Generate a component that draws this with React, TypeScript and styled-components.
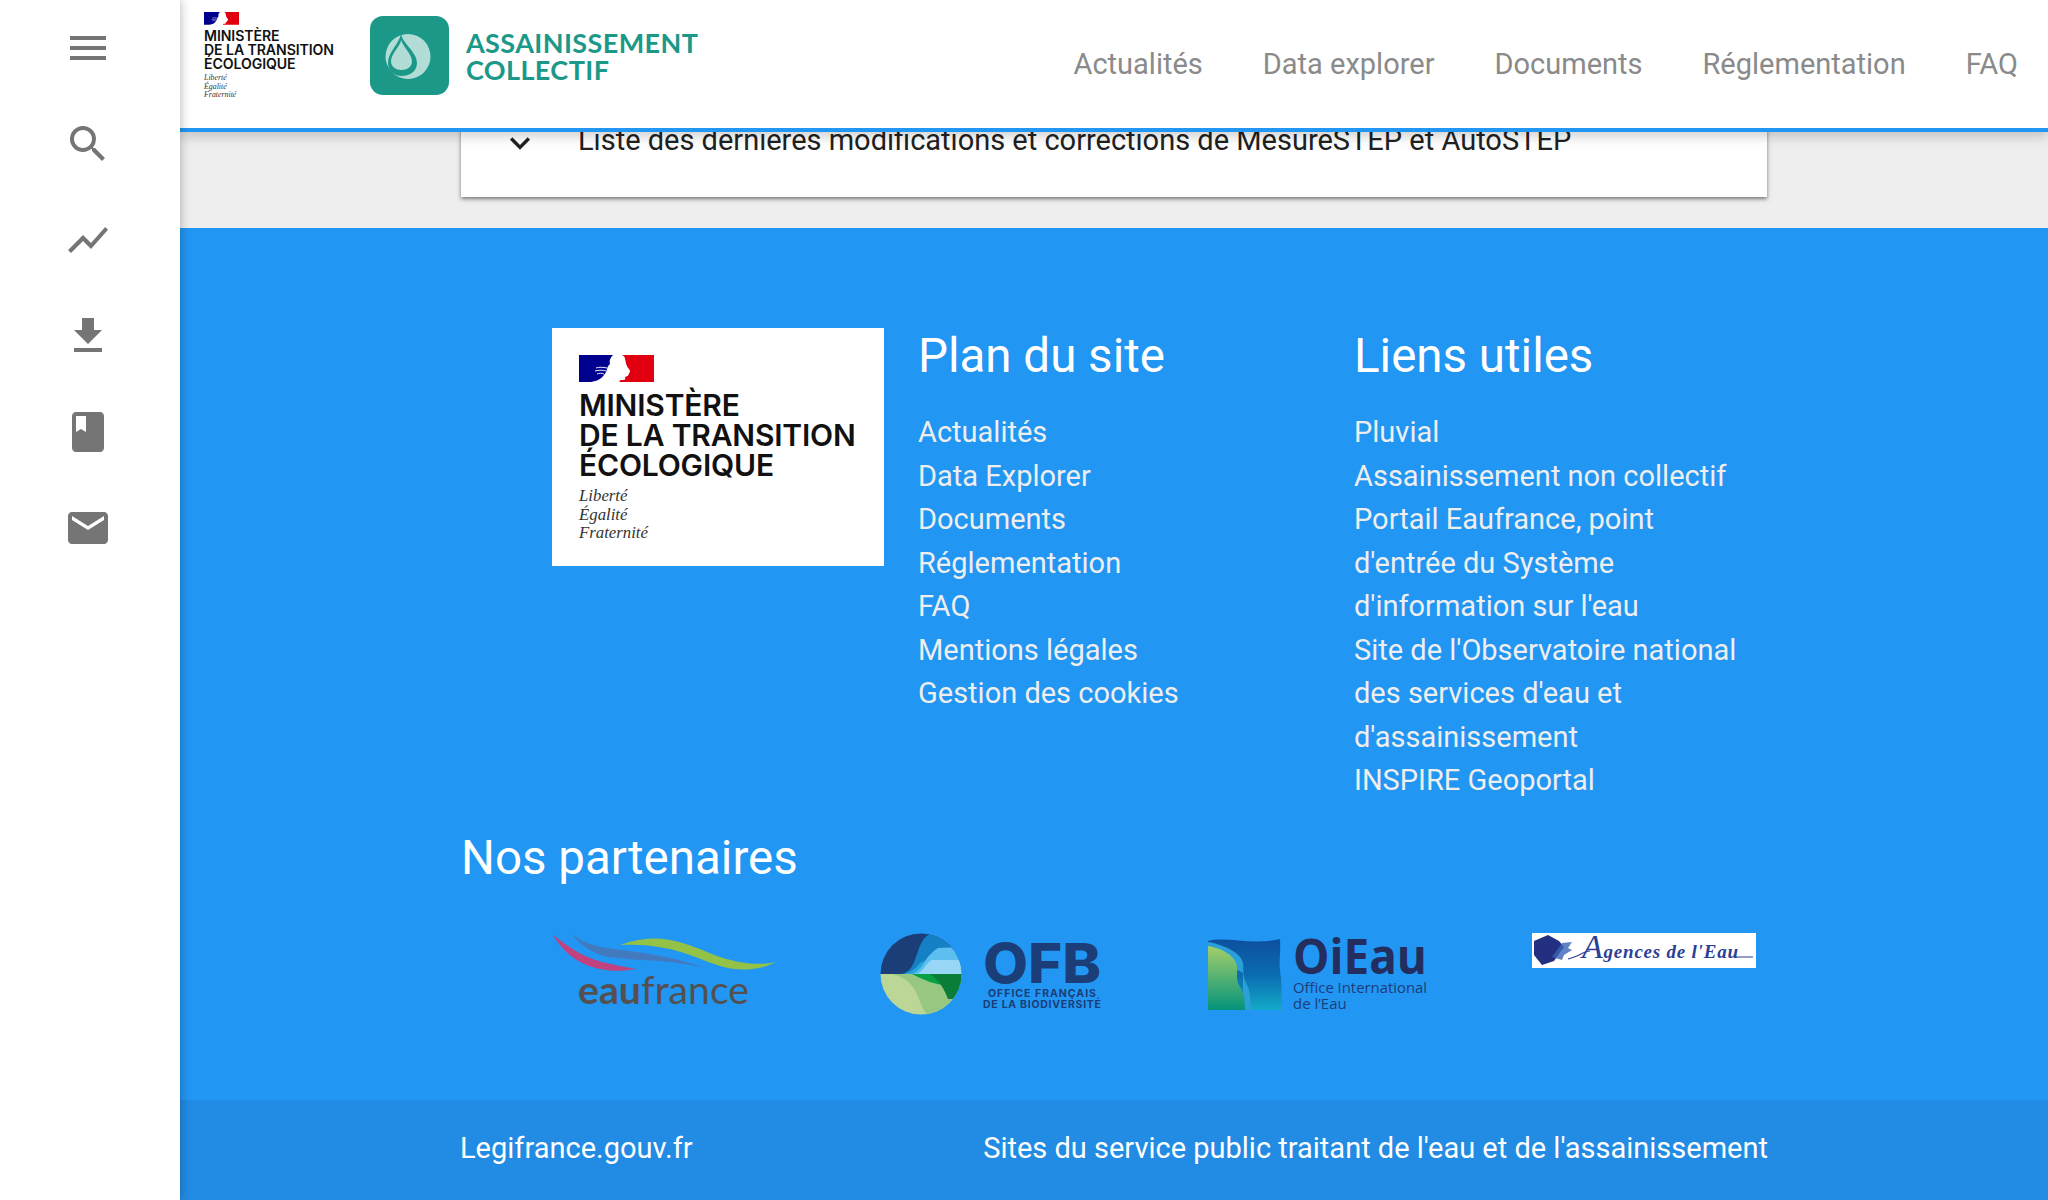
import React from "react";
import styled, { createGlobalStyle } from "styled-components";
import { MdMenu, MdSearch, MdShowChart, MdFileDownload, MdBook, MdEmail, MdKeyboardArrowDown } from "react-icons/md";

const GlobalStyle = createGlobalStyle`
  html, body {
    margin: 0;
    height: 100%;
    overflow: hidden;
    background: #eeeeee;
    font-family: Roboto, "Liberation Sans", sans-serif;
  }
  * { box-sizing: border-box; }
`;

const Page = styled.div`
  display: flex;
  width: 2048px;
  height: 1200px;
  overflow: hidden;
`;

const Sidebar = styled.nav`
  width: 180px;
  flex-shrink: 0;
  background: #fff;
  box-shadow: 0 0 10px rgba(0, 0, 0, 0.3);
  position: relative;
  z-index: 3;
  display: flex;
  flex-direction: column;
`;

const SideItem = styled.a`
  height: 96px;
  display: flex;
  align-items: center;
  justify-content: center;
  color: #757575;
  font-size: 48px;
  margin-left: -4px;
`;

const Main = styled.div`
  flex: 1;
  display: flex;
  flex-direction: column;
  min-width: 0;
`;

const Header = styled.header`
  height: 132px;
  flex-shrink: 0;
  background: #fff;
  border-bottom: 4px solid #2196f3;
  box-shadow: 0 4px 12px rgba(0, 0, 0, 0.2);
  position: relative;
  z-index: 2;
  display: flex;
  align-items: flex-start;
  padding: 12px 30px 0 24px;
`;

const HeaderBrand = styled.div`
  display: flex;
  align-items: flex-start;
`;

const AppBadge = styled.div`
  width: 79px;
  height: 79px;
  margin: 4px 0 0 36px;
  border-radius: 13px;
  background: #1c9888;
  display: flex;
  align-items: center;
  justify-content: center;
`;

const AppName = styled.div`
  margin: 17px 0 0 17px;
  color: #1c9888;
  font-family: Lato, "Open Sans", sans-serif;
  font-weight: 700;
  font-size: 27px;
  line-height: 27px;
  letter-spacing: 0.4px;
`;

const NavList = styled.div`
  margin-left: auto;
  display: flex;
  gap: 60px;
  height: 104px;
  align-items: center;
`;

const NavLink = styled.a`
  color: #8a8a8a;
  font-size: 29px;
  white-space: nowrap;
`;

const Strip = styled.div`
  height: 96px;
  flex-shrink: 0;
  overflow: hidden;
  display: flex;
  align-items: flex-end;
  padding: 0 281px 31px;
  background: #eeeeee;
`;

const AccordionCard = styled.div`
  width: 100%;
  height: 100px;
  flex-shrink: 0;
  background: #fff;
  box-shadow: 0 2px 4px rgba(0, 0, 0, 0.5);
  display: flex;
  align-items: flex-start;
  padding: 26px 0 0 39px;
  color: #212121;
  font-size: 29px;
  line-height: 34px;
`;

const Chevron = styled.span`
  width: 40px;
  margin: 3px 38px 0 0;
  font-size: 44px;
  line-height: 34px;
  height: 34px;
  display: flex;
  align-items: center;
  justify-content: center;
  color: #212121;
`;

const Footer = styled.footer`
  flex: 1;
  background: #2196f3;
  color: #fff;
  display: flex;
  flex-direction: column;
`;

const FooterBody = styled.div`
  flex: 1;
  padding: 100px 281px 0;
`;

const SiteGrid = styled.div`
  display: grid;
  grid-template-columns: 457px 436px 392px;
`;

const MinistryBox = styled.div`
  width: 332px;
  height: 238px;
  margin-left: 91px;
  background: #fff;
  padding: 27px;
`;

const Column = styled.div`
  display: flex;
  flex-direction: column;
`;

const ColumnTitle = styled.h2`
  margin: 1px 0 28px;
  font-size: 47.5px;
  line-height: 54px;
  font-weight: 400;
`;

const FooterLink = styled.a`
  color: #eeeeee;
  font-size: 29px;
  line-height: 43.5px;
`;

const PartnersTitle = styled.h2`
  margin: 28px 0 0;
  font-size: 47.5px;
  line-height: 54px;
  font-weight: 400;
`;

const PartnerRow = styled.div`
  display: grid;
  grid-template-columns: 328px 327px 325px 224px;
  margin: 48px 0 0 91px;
  align-items: start;
`;

const LegalBar = styled.div`
  height: 100px;
  flex-shrink: 0;
  background: #228be3;
  padding: 0 280px 5px;
  display: flex;
  align-items: center;
  justify-content: space-between;
  font-size: 29px;
  color: #fff;
`;

const MarkWrap = styled.div<{ $size: number }>`
  font-size: ${({ $size }) => $size}px;
  color: #111;
  line-height: 1;
`;

const MarkTitle = styled.div`
  margin-top: 0.28em;
  font-family: Inter, "Open Sans", sans-serif;
  font-weight: 600;
  line-height: 1em;
  white-space: nowrap;
  letter-spacing: -0.006em;
`;

const MarkMotto = styled.div`
  margin-top: 0.42em;
  font-family: "Liberation Serif", serif;
  font-style: italic;
  font-size: 0.56em;
  line-height: 1.09em;
  color: #333;
`;

const FlagMark: React.FC<{ width: number }> = ({ width }) => (
  <svg width={width} height={(width * 27) / 75} viewBox="0 0 75 27" style={{ display: "block" }}>
    <path d="M0 0H34C31 3 30 6 31 9C27 12 29 16 25 20C22 24 18 26 12 27H0Z" fill="#00008f" />
    <path d="M17 13C20 12 24 12 28 13M16 16C20 15 24 15 27 16M18 19C20 18 23 18 25 19" stroke="#fff" strokeWidth="0.9" fill="none" />
    <path d="M43 0H75V27H41C40 26 40 26 42 25C45 25 47 25 46 22C49 21 50 20 50 18C52 17 51 16 50 14C47 11 47 7 46 4C46 2 45 1 43 0Z" fill="#e1000f" />
  </svg>
);

const MinistryMark: React.FC<{ size: number }> = ({ size }) => (
  <MarkWrap $size={size}>
    <FlagMark width={size * 2.5} />
    <MarkTitle>
      MINISTÈRE<br />DE LA TRANSITION<br />ÉCOLOGIQUE
    </MarkTitle>
    <MarkMotto>
      Liberté<br />Égalité<br />Fraternité
    </MarkMotto>
  </MarkWrap>
);

const DropIcon = () => (
  <svg width="48" height="48" viewBox="0 0 48 48">
    <circle cx="23" cy="24.5" r="22.5" fill="#b2dcd6" />
    <path d="M16 2C18 12 32 20 32 31C32 39 25 44 17 44C8 44 3 38 3 31C3 20 14 12 16 2Z" fill="#1c9888" />
    <path d="M16.3 8C18 15 27 22 27 29.5C27 34.5 22 38 16.5 38C11 38 6 34.5 6 29.5C6 22 14.5 15 16.3 8Z" fill="#b2dcd6" />
  </svg>
);

const EauFranceLogo = () => (
  <svg width="226" height="80" viewBox="0 0 226 80" style={{ display: "block" }}>
    <path d="M1 2C14 12 30 24 50 29C62 32 74 34 84 36C64 40 44 37 30 30C18 24 8 14 1 2Z" fill="#c2427f" />
    <path d="M20 1C30 9 42 13 55 15C75 18 95 20 108 23C125 26 142 31 153 35C135 31 122 29 108 28C90 27 72 26 55 24C40 20 28 12 20 1Z" fill="#4379be" />
    <path d="M68 12C84 6 100 4 118 7C135 10 150 17 165 23C185 30 205 33 224 29C208 37 188 39 168 33C150 27 135 20 118 16C100 12 84 11 68 12Z" fill="#93c247" />
    <text x="26" y="71" fontFamily="Lato, sans-serif" fontSize="38" fill="#555050" textLength="171" lengthAdjust="spacingAndGlyphs">
      <tspan fontWeight="700">eau</tspan>
      <tspan fontWeight="400">france</tspan>
    </text>
  </svg>
);

const OfbLogo = () => (
  <svg width="222" height="84" viewBox="0 0 222 84" style={{ display: "block" }}>
    <defs>
      <clipPath id="ofb-disc">
        <ellipse cx="41" cy="41" rx="40.5" ry="40.5" />
      </clipPath>
    </defs>
    <g clipPath="url(#ofb-disc)">
      <rect width="82" height="41" fill="#1b3d78" />
      <path d="M22 41C40 37 34 6 52 0H82V41Z" fill="#1580c4" />
      <path d="M32 41C42 37 44 24 58 15L82 14V41Z" fill="#5cbff0" />
      <path d="M38 41C44 37 46 30 52 27H82V41Z" fill="#98d6f5" />
      <path d="M22 41C30 40 36 36 40 30L46 27C42 34 38 39 32 41Z" fill="#2aa6dc" />
      <rect y="41" width="82" height="42" fill="#bcd795" />
      <path d="M12 41H82V84H50C36 74 42 48 12 41Z" fill="#98c782" />
      <path d="M32 41H82V70L66 52C56 52 46 48 32 41Z" fill="#07a044" />
      <path d="M50 41H82V66H68C64 56 60 48 50 41Z" fill="#0a7d38" />
    </g>
    <text x="103" y="50" fontFamily="Inter, sans-serif" fontWeight="800" fontSize="55" fill="#1b3d78" textLength="118" lengthAdjust="spacingAndGlyphs">OFB</text>
    <text x="108" y="64" fontFamily="Inter, sans-serif" fontWeight="700" fontSize="10.5" fill="#1b3d78" textLength="108">OFFICE FRANÇAIS</text>
    <text x="103" y="75" fontFamily="Inter, sans-serif" fontWeight="700" fontSize="10.5" fill="#1b3d78" textLength="118">DE LA BIODIVERSITÉ</text>
  </svg>
);

const OiEauLogo = () => (
  <svg width="222" height="80" viewBox="0 0 222 80" style={{ display: "block" }}>
    <defs>
      <linearGradient id="oi-land" x1="0" y1="0" x2="0" y2="1">
        <stop offset="0" stopColor="#a4cf6a" />
        <stop offset="1" stopColor="#04937c" />
      </linearGradient>
      <linearGradient id="oi-water" x1="0" y1="0" x2="0" y2="1">
        <stop offset="0" stopColor="#0d4f9e" />
        <stop offset="0.5" stopColor="#0b6cb0" />
        <stop offset="1" stopColor="#12aac8" />
      </linearGradient>
    </defs>
    <path d="M1 8C20 3 45 13 73 6C74 22 71 28 74 45C75 55 74 65 75 77H1Z" fill="url(#oi-water)" />
    <path d="M1 9C18 12 34 20 36 30C37 38 35 42 40 52C44 60 43 68 44 77H36V40L1 20Z" fill="#2b9fd8" />
    <path d="M1 13C14 15 28 22 30 33C31 40 28 46 33 54C38 62 38 70 38 77H1Z" fill="url(#oi-land)" />
    <text x="86" y="41" fontFamily="'Open Sans', sans-serif" fontWeight="700" fontSize="49" fill="#232e5e" textLength="134" lengthAdjust="spacingAndGlyphs">OiEau</text>
    <text x="86" y="60" fontFamily="'Open Sans', sans-serif" fontSize="15" fill="#1f3d7a" textLength="134" lengthAdjust="spacingAndGlyphs">Office International</text>
    <text x="86" y="76" fontFamily="'Open Sans', sans-serif" fontSize="15" fill="#1f3d7a">de l’Eau</text>
  </svg>
);

const AgencesLogo = () => (
  <svg width="224" height="35" viewBox="0 0 224 35" style={{ display: "block" }}>
    <rect width="224" height="35" fill="#fff" />
    <path d="M2 8L16 2L27 8L32 14L22 28L10 32L2 22Z" fill="#23307f" />
    <path d="M20 24L30 10L40 9L36 15L40 17L32 22L30 27Z" fill="#3a64b8" opacity="0.8" />
    <path d="M36 26C46 24 52 18 58 18M204 24H221" stroke="#2b3f95" strokeWidth="1.2" fill="none" />
    <text x="50" y="25" fontFamily="'Liberation Serif', serif" fontStyle="italic" fill="#2b3f95" textLength="156" lengthAdjust="spacing">
      <tspan fontSize="34">A</tspan>
      <tspan fontSize="19" fontWeight="700">gences de l'Eau</tspan>
    </text>
  </svg>
);

const sideIcons = [MdMenu, MdSearch, MdShowChart, MdFileDownload, MdBook, MdEmail];
const navItems = ["Actualités", "Data explorer", "Documents", "Réglementation", "FAQ"];
const siteLinks = ["Actualités", "Data Explorer", "Documents", "Réglementation", "FAQ", "Mentions légales", "Gestion des cookies"];
const usefulLinks = [
  "Pluvial",
  "Assainissement non collectif",
  "Portail Eaufrance, point d'entrée du Système d'information sur l'eau",
  "Site de l'Observatoire national des services d'eau et d'assainissement",
  "INSPIRE Geoportal",
];

export default function App() {
  return (
    <Page>
      <GlobalStyle />
      <Sidebar>
        {sideIcons.map((Icon, index) => (
          <SideItem key={index}>
            <Icon />
          </SideItem>
        ))}
      </Sidebar>
      <Main>
        <Header>
          <HeaderBrand>
            <MinistryMark size={14.1} />
            <AppBadge>
              <DropIcon />
            </AppBadge>
            <AppName>
              ASSAINISSEMENT
              <br />
              COLLECTIF
            </AppName>
          </HeaderBrand>
          <NavList>
            {navItems.map((item) => (
              <NavLink key={item}>{item}</NavLink>
            ))}
          </NavList>
        </Header>
        <Strip>
          <AccordionCard>
            <Chevron>
              <MdKeyboardArrowDown />
            </Chevron>
            Liste des dernières modifications et corrections de MesureSTEP et AutoSTEP
          </AccordionCard>
        </Strip>
        <Footer>
          <FooterBody>
            <SiteGrid>
              <MinistryBox>
                <MinistryMark size={30} />
              </MinistryBox>
              <Column>
                <ColumnTitle>Plan du site</ColumnTitle>
                {siteLinks.map((item) => (
                  <FooterLink key={item}>{item}</FooterLink>
                ))}
              </Column>
              <Column>
                <ColumnTitle>Liens utiles</ColumnTitle>
                {usefulLinks.map((item) => (
                  <FooterLink key={item}>{item}</FooterLink>
                ))}
              </Column>
            </SiteGrid>
            <PartnersTitle>Nos partenaires</PartnersTitle>
            <PartnerRow>
              <EauFranceLogo />
              <OfbLogo />
              <OiEauLogo />
              <AgencesLogo />
            </PartnerRow>
          </FooterBody>
          <LegalBar>
            <span>Legifrance.gouv.fr</span>
            <span>Sites du service public traitant de l'eau et de l'assainissement</span>
          </LegalBar>
        </Footer>
      </Main>
    </Page>
  );
}
